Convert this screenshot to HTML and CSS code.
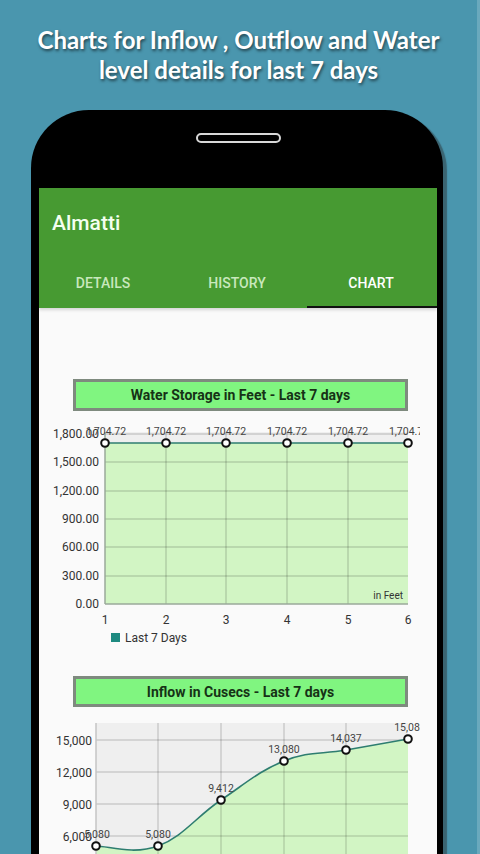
FILE: index.html
```html
<!DOCTYPE html>
<html>
<head>
<meta charset="utf-8">
<link rel="stylesheet" href="styles.css">
</head>
<body>
<div class="page">
  <h1 class="headline">Charts for Inflow , Outflow and Water<br>level details for last 7 days</h1>
  <div class="phone">
    <div class="speaker"></div>
    <div class="screen">
      <div class="appbar">
        <div class="toolbar">Almatti</div>
        <div class="tabs">
          <div class="tab">DETAILS</div>
          <div class="tab">HISTORY</div>
          <div class="tab active">CHART</div>
        </div>
      </div>
      <div class="content">
        <div class="chart-title">Water Storage in Feet - Last 7 days</div>
        <svg class="chart chart1" width="399" height="249" viewBox="39 411 399 249">
          <defs><clipPath id="c1"><rect x="39" y="411" width="381" height="249"/></clipPath></defs>
          <rect x="105" y="432" width="303" height="172" fill="#efefef"/>
          <rect x="105" y="443" width="303" height="161" fill="#d2f5c4"/>
          <g stroke="#000" stroke-opacity="0.16" stroke-width="1.5">
            <line x1="105" y1="434" x2="408" y2="434"/>
            <line x1="105" y1="462" x2="408" y2="462"/>
            <line x1="105" y1="491" x2="408" y2="491"/>
            <line x1="105" y1="519" x2="408" y2="519"/>
            <line x1="105" y1="547" x2="408" y2="547"/>
            <line x1="105" y1="576" x2="408" y2="576"/>
            <line x1="166" y1="432" x2="166" y2="604"/>
            <line x1="226" y1="432" x2="226" y2="604"/>
            <line x1="287" y1="432" x2="287" y2="604"/>
            <line x1="348" y1="432" x2="348" y2="604"/>
          </g>
          <g stroke="#9aa89a" stroke-width="1.5">
            <line x1="105" y1="432" x2="105" y2="604"/>
            <line x1="105" y1="604" x2="408" y2="604"/>
          </g>
          <g class="ylab" text-anchor="end">
            <text x="99" y="438">1,800.00</text>
            <text x="99" y="466">1,500.00</text>
            <text x="99" y="495">1,200.00</text>
            <text x="99" y="523">900.00</text>
            <text x="99" y="551">600.00</text>
            <text x="99" y="580">300.00</text>
            <text x="99" y="608">0.00</text>
          </g>
          <line x1="105" y1="443" x2="408" y2="443" stroke="#2e7d70" stroke-width="1.6"/>
          <g fill="#fff" stroke="#111" stroke-width="2">
            <circle cx="105" cy="443" r="3.8"/>
            <circle cx="166" cy="443" r="3.8"/>
            <circle cx="226" cy="443" r="3.8"/>
            <circle cx="287" cy="443" r="3.8"/>
            <circle cx="348" cy="443" r="3.8"/>
            <circle cx="408" cy="443" r="3.8"/>
          </g>
          <g class="vlab" text-anchor="middle" clip-path="url(#c1)">
            <text x="106" y="435">1,704.72</text>
            <text x="166" y="435">1,704.72</text>
            <text x="226" y="435">1,704.72</text>
            <text x="287" y="435">1,704.72</text>
            <text x="348" y="435">1,704.72</text>
            <text x="409" y="435">1,704.72</text>
          </g>
          <g class="xlab" text-anchor="middle">
            <text x="105" y="624">1</text>
            <text x="166" y="624">2</text>
            <text x="226" y="624">3</text>
            <text x="287" y="624">4</text>
            <text x="348" y="624">5</text>
            <text x="408" y="624">6</text>
          </g>
          <text class="unit" x="403" y="599" text-anchor="end">in Feet</text>
          <rect x="111" y="633" width="9" height="9" fill="#1e8a80"/>
          <text class="legend" x="125" y="642">Last 7 Days</text>
        </svg>
        <div class="chart-title second">Inflow in Cusecs - Last 7 days</div>
        <svg class="chart chart2" width="399" height="150" viewBox="39 707 399 150">
          <defs><clipPath id="c2"><rect x="39" y="707" width="381" height="150"/></clipPath></defs>
          <rect x="96" y="723" width="312" height="140" fill="#efefef"/>
          <path d="M96,846 C108.4,846 133,855.2 158,846 C183,836.8 195.8,817 221,800 C246.2,783 259,771 284,761 C309,751 321.2,754.4 346,750 C370.8,745.6 395.6,741.2 408,739 L408,860 L96,860 Z" fill="#d2f5c4"/>
          <g stroke="#000" stroke-opacity="0.15" stroke-width="1.5">
            <line x1="96" y1="740" x2="408" y2="740"/>
            <line x1="96" y1="772" x2="408" y2="772"/>
            <line x1="96" y1="804" x2="408" y2="804"/>
            <line x1="96" y1="836" x2="408" y2="836"/>
            <line x1="158" y1="723" x2="158" y2="860"/>
            <line x1="221" y1="723" x2="221" y2="860"/>
            <line x1="284" y1="723" x2="284" y2="860"/>
            <line x1="346" y1="723" x2="346" y2="860"/>
          </g>
          <line x1="96" y1="723" x2="96" y2="860" stroke="#c4c4c4" stroke-width="1.5"/>
          <g class="ylab" text-anchor="end">
            <text x="92" y="745">15,000</text>
            <text x="92" y="777">12,000</text>
            <text x="92" y="809">9,000</text>
            <text x="92" y="841">6,000</text>
          </g>
          <path d="M96,846 C108.4,846 133,855.2 158,846 C183,836.8 195.8,817 221,800 C246.2,783 259,771 284,761 C309,751 321.2,754.4 346,750 C370.8,745.6 395.6,741.2 408,739" fill="none" stroke="#2e7d70" stroke-width="1.6"/>
          <g fill="#fff" stroke="#111" stroke-width="2">
            <circle cx="96" cy="846" r="3.8"/>
            <circle cx="158" cy="846" r="3.8"/>
            <circle cx="221" cy="800" r="3.8"/>
            <circle cx="284" cy="761" r="3.8"/>
            <circle cx="346" cy="750" r="3.8"/>
            <circle cx="408" cy="739" r="3.8"/>
          </g>
          <g class="vlab" text-anchor="middle" clip-path="url(#c2)">
            <text x="97" y="838">5,080</text>
            <text x="158" y="838">5,080</text>
            <text x="221" y="792">9,412</text>
            <text x="284" y="753">13,080</text>
            <text x="346" y="742">14,037</text>
            <text x="410" y="731">15,080</text>
          </g>
        </svg>
      </div>
    </div>
  </div>
</div>
</body>
</html>
```

FILE: styles.css
```css
html, body {
  margin: 0;
  padding: 0;
}
body {
  width: 480px;
  height: 854px;
  overflow: hidden;
  background: #4a96ae;
}
.page {
  width: 480px;
  height: 854px;
  overflow: hidden;
  box-sizing: border-box;
  border-right: 3px solid #6aa9bd;
}
.headline {
  margin: 0;
  padding-top: 25px;
  height: 60px;
  font-family: Lato, "Open Sans", sans-serif;
  font-weight: 700;
  font-size: 24px;
  line-height: 30px;
  color: #fff;
  text-align: center;
  text-shadow: 1px 2px 3px rgba(0, 0, 0, 0.55);
}
.phone {
  margin: 25px 0 0 31px;
  width: 412px;
  height: 760px;
  box-sizing: border-box;
  background: #000;
  border-radius: 58px 58px 0 0;
  padding: 78px 6px 0 8px;
  box-shadow: 4px 3px 1px rgba(40, 40, 40, 0.45);
  display: flex;
  flex-direction: column;
  position: relative;
}
.speaker {
  position: absolute;
  left: 165px;
  top: 23px;
  width: 85px;
  height: 10px;
  box-sizing: border-box;
  border: 2px solid #d8d8d8;
  border-radius: 6px;
}
.screen {
  flex: 1;
  background: #fafafa;
  display: flex;
  flex-direction: column;
  font-family: Roboto, "Liberation Sans", sans-serif;
}
.appbar {
  background: #479a32;
  height: 120px;
  display: flex;
  flex-direction: column;
  box-shadow: 0 2px 3px rgba(0, 0, 0, 0.15);
}
.toolbar {
  height: 68px;
  display: flex;
  align-items: center;
  padding-left: 13px;
  padding-top: 1px;
  box-sizing: border-box;
  color: #f4fff0;
  font-size: 21px;
  font-weight: 500;
}
.tabs {
  flex: 1;
  display: flex;
}
.tab {
  flex: 1;
  display: flex;
  align-items: center;
  justify-content: center;
  font-size: 14px;
  font-weight: 500;
  color: #c9e8bd;
  box-sizing: border-box;
  padding-right: 6px;
  padding-top: 1px;
}
.tab.active {
  color: #ffffff;
  border-bottom: 2px solid #111;
  padding-top: 3px;
  padding-right: 2px;
}
.content {
  padding-top: 71px;
  display: flex;
  flex-direction: column;
}
.chart-title {
  margin-left: 34px;
  width: 335px;
  height: 32px;
  box-sizing: border-box;
  border: 3px solid #7e8a7e;
  background: #80f580;
  color: #163216;
  font-weight: 700;
  font-size: 14px;
  display: flex;
  align-items: center;
  justify-content: center;
}
.chart-title.second {
  margin-top: 16px;
  height: 31px;
}
.chart {
  display: block;
}
.ylab text, .xlab text {
  font-family: Roboto, "Liberation Sans", sans-serif;
  font-size: 12px;
  fill: #333;
}
.vlab text {
  font-family: Roboto, "Liberation Sans", sans-serif;
  font-size: 10.5px;
  fill: #444;
}
.unit {
  font-family: Roboto, "Liberation Sans", sans-serif;
  font-size: 10px;
  fill: #333;
}
.legend {
  font-family: Roboto, "Liberation Sans", sans-serif;
  font-size: 12px;
  fill: #333;
}
```
